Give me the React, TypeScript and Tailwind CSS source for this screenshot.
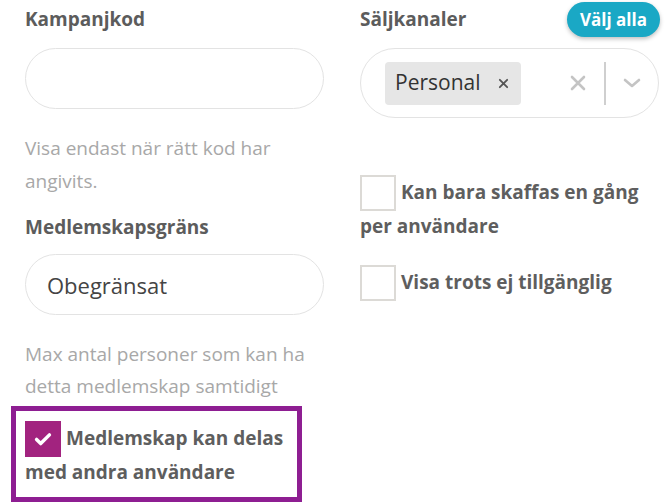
import React, { useState } from 'react';

const font = { fontFamily: '"Open Sans", "Noto Sans", sans-serif' };

const Label: React.FC<{ children: React.ReactNode }> = ({ children }) => (
  <span className="text-[19px] font-bold text-[#5c5c5c]">{children}</span>
);

const Check: React.FC<{ checked: boolean; onToggle: () => void; label: string }> = ({
  checked,
  onToggle,
  label,
}) => (
  <div className="text-[19px] font-bold leading-[34px] text-[#5e5e5e]" onClick={onToggle}>
    <span
      className={`float-left mr-[5px] -mb-[4px] flex h-[36px] w-[36px] items-center justify-center border-2 ${
        checked ? 'border-[#a2237f] bg-[#a2237f]' : 'border-[#dcdad6] bg-white'
      }`}
    >
      {checked && (
        <svg viewBox="0 0 24 24" className="h-[22px] w-[22px]" fill="none" stroke="white" strokeWidth="3.8" strokeLinecap="round" strokeLinejoin="round">
          <path d="M5 12.5l4.5 4.5L19 7.5" />
        </svg>
      )}
    </span>
    {label}
  </div>
);

export default function App() {
  const [shared, setShared] = useState(true);
  const [once, setOnce] = useState(false);
  const [visible, setVisible] = useState(false);

  return (
    <div className="h-[503px] w-[670px] overflow-hidden bg-white" style={font}>
      <div className="flex gap-[36px] pl-[25px]">
        {/* Left column */}
        <div className="flex w-[299px] flex-col">
          <div className="flex h-[38px] items-center">
            <Label>Kampanjkod</Label>
          </div>
          <input className="mt-[10px] h-[61px] w-full rounded-full border border-[#e3e3e3] px-[21px] text-[22px] text-[#444] outline-none" />
          <p className="mt-[23px] text-[19px] leading-[33px] text-[#a8a8a8]">
            Visa endast när rätt kod har angivits.
          </p>
          <div className="mt-[9px] flex h-[40px] items-center">
            <Label>Medlemskapsgräns</Label>
          </div>
          <input
            defaultValue="Obegränsat"
            className="mt-[7px] h-[61px] w-full rounded-full border border-[#e3e3e3] px-[21px] text-[22px] text-[#444] outline-none"
          />
          <p className="mt-[23px] text-[19px] leading-[32px] text-[#a8a8a8]">
            Max antal personer som kan ha detta medlemskap samtidigt
          </p>
          <div className="mt-[4px] -ml-[14px] w-[291px] border-[5px] border-[#8e1e92] px-[9px] pt-[10px] pb-[8px]">
            <Check checked={shared} onToggle={() => setShared(!shared)} label="Medlemskap kan delas med andra användare" />
          </div>
        </div>

        {/* Right column */}
        <div className="flex w-[299px] flex-col">
          <div className="flex h-[44px] items-center justify-between">
            <span className="mb-[6px]">
              <Label>Säljkanaler</Label>
            </span>
            <button className="-mr-[1px] mb-[5px] h-[35px] rounded-full bg-[#1aa8c5] px-[13px] text-[17px] font-bold text-white shadow-[0_2px_4px_rgba(0,0,0,0.25)]">
              Välj alla
            </button>
          </div>
          <div className="mt-[4px] flex h-[70px] items-center rounded-full border border-[#e3e3e3] pl-[24px] pr-[16px]">
            <div className="flex h-[43px] items-center rounded-[4px] bg-[#e6e6e6] pl-[10px] pr-[12px]">
              <span className="text-[21px] text-[#333]">Personal</span>
              <svg viewBox="0 0 12 12" className="ml-[17px] h-[11px] w-[11px]" stroke="#555" strokeWidth="2" strokeLinecap="round">
                <path d="M2 2l8 8M10 2l-8 8" />
              </svg>
            </div>
            <div className="flex-1" />
            <svg viewBox="0 0 16 16" className="mr-[18px] h-[16px] w-[16px]" stroke="#c4c4c4" strokeWidth="2.6" strokeLinecap="round">
              <path d="M2 2l12 12M14 2L2 14" />
            </svg>
            <div className="h-[43px] w-[2px] bg-[#cfcfcf]" />
            <svg viewBox="0 0 20 12" className="ml-[16px] h-[12px] w-[20px]" fill="none" stroke="#c4c4c4" strokeWidth="2.6" strokeLinecap="round" strokeLinejoin="round">
              <path d="M3 3l7 6 7-6" />
            </svg>
          </div>
          <div className="mt-[57px]">
            <Check checked={once} onToggle={() => setOnce(!once)} label="Kan bara skaffas en gång per användare" />
          </div>
          <div className="mt-[22px]">
            <Check checked={visible} onToggle={() => setVisible(!visible)} label="Visa trots ej tillgänglig" />
          </div>
        </div>
      </div>
    </div>
  );
}
